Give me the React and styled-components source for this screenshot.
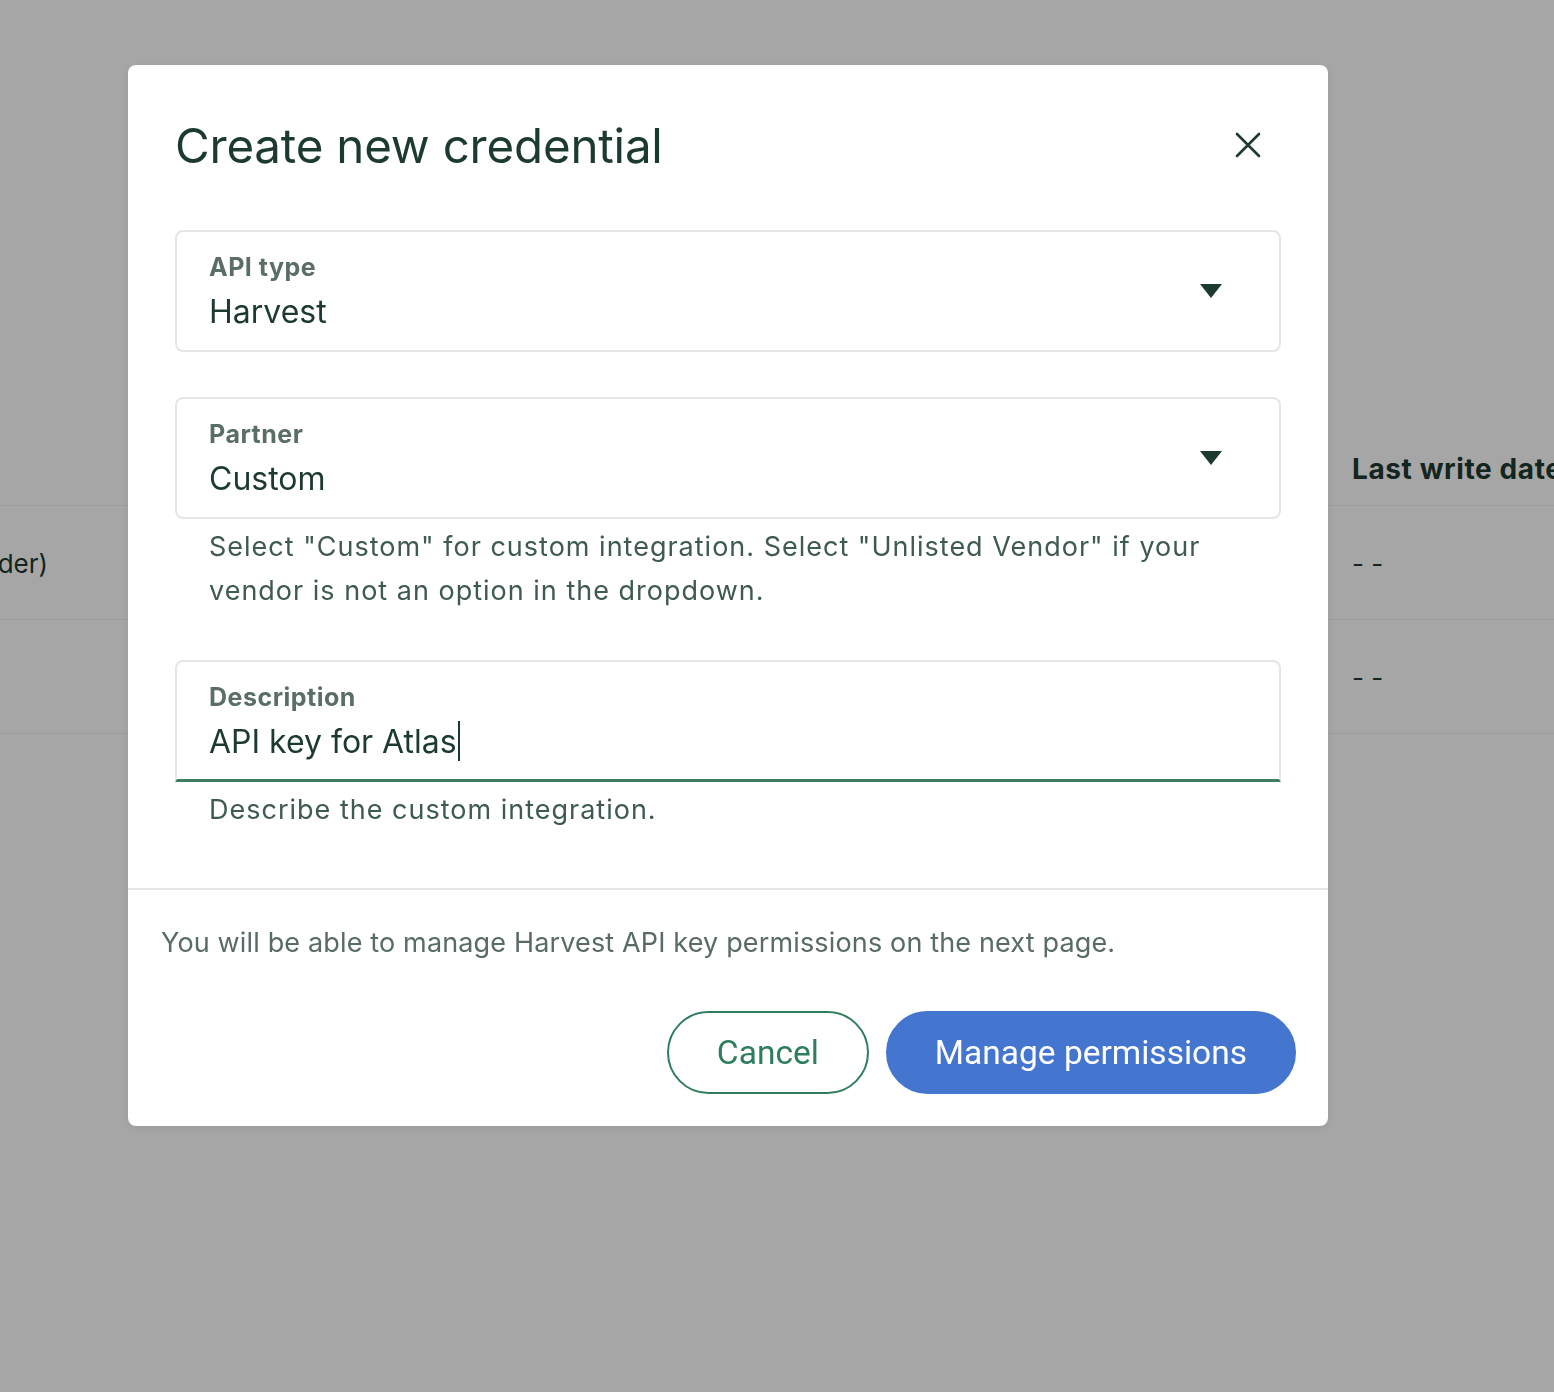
import React from 'react';
import styled, { createGlobalStyle } from 'styled-components';

const GlobalStyle = createGlobalStyle`
  html, body {
    margin: 0;
    padding: 0;
    overflow: hidden;
    background: #ffffff;
  }
  body {
    font-family: Inter, "Noto Sans", sans-serif;
    color: #1d3a31;
  }
`;

const Page = styled.div`
  width: 1554px;
  height: 1392px;
  padding-top: 430px;
  box-sizing: border-box;
`;

const Table = styled.div`
  display: flex;
  flex-direction: column;
`;

const Row = styled.div`
  display: grid;
  grid-template-columns: 48px 1304px 1fr;
  align-items: center;
  height: ${(p) => (p.$head ? '75px' : '113px')};
  border-bottom: 1px solid #f2f2f2;
`;

const Cell = styled.div`
  display: flex;
  justify-content: ${(p) => (p.$end ? 'flex-end' : 'flex-start')};
  white-space: nowrap;
  font-size: ${(p) => (p.$head ? '28px' : '26px')};
  font-weight: ${(p) => (p.$head ? 700 : 400)};
  color: #1d3a31;
  letter-spacing: ${(p) => (p.$head ? '0.6px' : '0')};
  padding-top: 2px;
`;

const Overlay = styled.div`
  position: fixed;
  inset: 0;
  background: rgba(0, 0, 0, 0.35);
  padding: 65px 0 0 128px;
  box-sizing: border-box;
`;

const Modal = styled.div`
  width: 1200px;
  background: #ffffff;
  border-radius: 8px;
  box-shadow: 0 2px 10px rgba(0, 0, 0, 0.08);
  display: flex;
  flex-direction: column;
`;

const Header = styled.div`
  display: flex;
  justify-content: space-between;
  align-items: center;
  padding: 48px 66px 0 47px;
  height: 112px;
  box-sizing: border-box;
`;

const Title = styled.h2`
  margin: 0;
  font-size: 47.5px;
  font-weight: 400;
  letter-spacing: -0.2px;
  color: #1d3a31;
`;

const CloseButton = styled.button`
  border: none;
  background: none;
  padding: 0;
  width: 28px;
  height: 28px;
  display: flex;
  align-items: center;
  justify-content: center;
  cursor: pointer;
`;

const Body = styled.div`
  padding: 53px 47px 54px;
  display: flex;
  flex-direction: column;
  gap: 45px;
`;

const FieldGroup = styled.div`
  display: flex;
  flex-direction: column;
`;

const Field = styled.div`
  height: 122px;
  box-sizing: border-box;
  border: 2px solid #e3e8e6;
  border-bottom: ${(p) => (p.$focused ? '3px solid #3a7d5f' : '2px solid #e3e8e6')};
  border-radius: ${(p) => (p.$focused ? '8px 8px 0 0' : '8px')};
  padding: 0 56px 0 32px;
  display: flex;
  align-items: center;
  justify-content: space-between;
`;

const FieldText = styled.div`
  display: flex;
  flex-direction: column;
  align-self: flex-start;
  padding-top: 20px;
`;

const Label = styled.span`
  font-size: 25px;
  font-weight: 700;
  letter-spacing: 0.5px;
  color: #5a6e67;
  line-height: 30px;
`;

const Value = styled.span`
  font-size: 32px;
  color: #1d3a31;
  line-height: 44px;
  margin-top: 8px;
`;

const Caret = styled.span`
  display: inline-block;
  width: 2px;
  height: 40px;
  background: #1d3a31;
  vertical-align: middle;
  margin-left: 1px;
  margin-top: -6px;
`;

const Helper = styled.p`
  margin: 6px 0 2px;
  padding: 0 34px;
  font-size: 27px;
  line-height: 44px;
  letter-spacing: 1px;
  color: #3f5a51;
`;

const Footer = styled.div`
  border-top: 2px solid #e3e8e6;
  padding: 35px 32px 32px 33px;
  display: flex;
  flex-direction: column;
  gap: 50px;
`;

const Note = styled.p`
  margin: 0;
  font-size: 27px;
  line-height: 36px;
  letter-spacing: 0.15px;
  color: #586b65;
`;

const Actions = styled.div`
  display: flex;
  justify-content: flex-end;
  gap: 17px;
`;

const Button = styled.button`
  height: 83px;
  border-radius: 42px;
  font-family: Roboto, "Liberation Sans", sans-serif;
  font-size: 33.5px;
  padding: 0 ${(p) => (p.$primary ? '47px' : '48px')};
  border: 2px solid ${(p) => (p.$primary ? '#4475cf' : '#2f7d5c')};
  background: ${(p) => (p.$primary ? '#4475cf' : '#ffffff')};
  color: ${(p) => (p.$primary ? '#ffffff' : '#2f7d5c')};
  cursor: pointer;
`;

function ChevronDown() {
  return (
    <svg width="24" height="16" viewBox="0 0 24 16">
      <path d="M1 1 H23 L12 15 Z" fill="#1d3a31" />
    </svg>
  );
}

function CloseIcon() {
  return (
    <svg width="28" height="28" viewBox="0 0 28 28">
      <path d="M3 3 L25 25 M25 3 L3 25" stroke="#1d3a31" strokeWidth="2.6" strokeLinecap="round" />
    </svg>
  );
}

function App() {
  return (
    <>
      <GlobalStyle />
      <Page>
        <Table>
          <Row $head>
            <Cell $head />
            <Cell $head />
            <Cell $head>Last write date</Cell>
          </Row>
          <Row>
            <Cell $end>(Vendor Placeholder)</Cell>
            <Cell />
            <Cell>- -</Cell>
          </Row>
          <Row>
            <Cell />
            <Cell />
            <Cell>- -</Cell>
          </Row>
        </Table>
      </Page>
      <Overlay>
        <Modal>
          <Header>
            <Title>Create new credential</Title>
            <CloseButton aria-label="Close">
              <CloseIcon />
            </CloseButton>
          </Header>
          <Body>
            <FieldGroup>
              <Field>
                <FieldText>
                  <Label>API type</Label>
                  <Value>Harvest</Value>
                </FieldText>
                <ChevronDown />
              </Field>
            </FieldGroup>
            <FieldGroup>
              <Field>
                <FieldText>
                  <Label>Partner</Label>
                  <Value>Custom</Value>
                </FieldText>
                <ChevronDown />
              </Field>
              <Helper>
                Select "Custom" for custom integration. Select "Unlisted Vendor" if your vendor is not an option in the dropdown.
              </Helper>
            </FieldGroup>
            <FieldGroup>
              <Field $focused>
                <FieldText>
                  <Label>Description</Label>
                  <Value>
                    API key for Atlas<Caret />
                  </Value>
                </FieldText>
              </Field>
              <Helper>Describe the custom integration.</Helper>
            </FieldGroup>
          </Body>
          <Footer>
            <Note>You will be able to manage Harvest API key permissions on the next page.</Note>
            <Actions>
              <Button>Cancel</Button>
              <Button $primary>Manage permissions</Button>
            </Actions>
          </Footer>
        </Modal>
      </Overlay>
    </>
  );
}

export default App;
